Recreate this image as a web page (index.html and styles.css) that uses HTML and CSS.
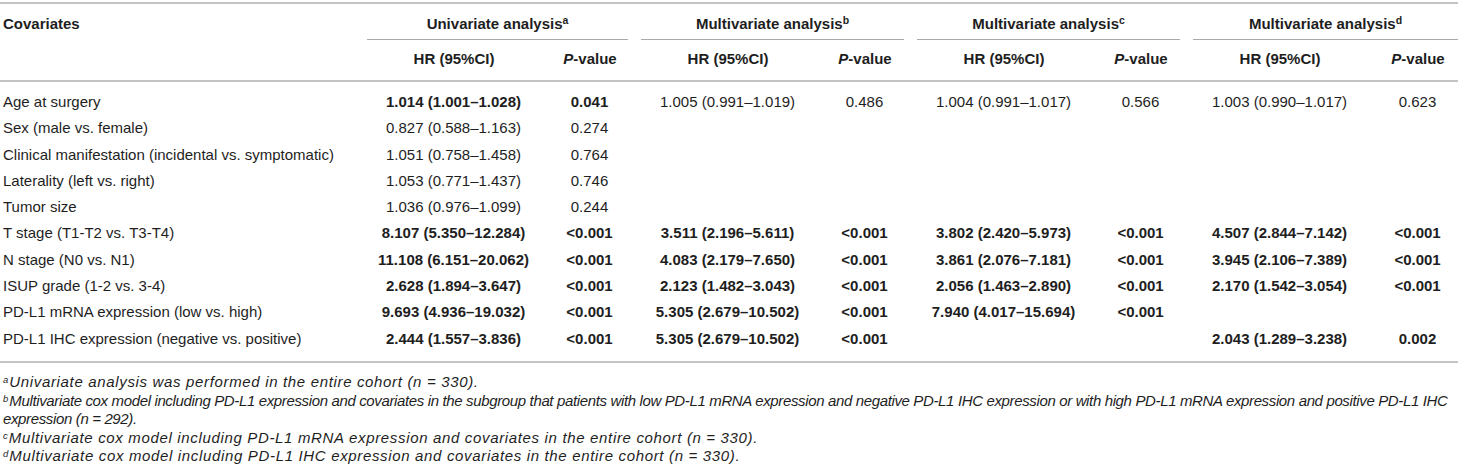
FILE: index.html
```html
<!DOCTYPE html>
<html lang="en">
<head>
<meta charset="utf-8">
<title>Cox regression table</title>
<link rel="stylesheet" href="styles.css">
</head>
<body>
<div class="wrap">
<table class="cox">
  <colgroup>
    <col class="c-cov">
    <col class="c-hr"><col class="c-p1">
    <col class="c-hr"><col class="c-p2">
    <col class="c-hr"><col class="c-p2">
    <col class="c-hr"><col class="c-p3">
  </colgroup>
  <thead>
    <tr class="h1">
      <th class="cov" rowspan="2">Covariates</th>
      <th class="grp" colspan="2"><div class="grp-in">Univariate analysis<sup>a</sup></div></th>
      <th class="grp" colspan="2"><div class="grp-in">Multivariate analysis<sup>b</sup></div></th>
      <th class="grp" colspan="2"><div class="grp-in">Multivariate analysis<sup>c</sup></div></th>
      <th class="grp" colspan="2"><div class="grp-in">Multivariate analysis<sup>d</sup></div></th>
    </tr>
    <tr class="h2">
      <th class="hr">HR (95%CI)</th><th class="p"><i>P</i>-value</th>
      <th class="hr">HR (95%CI)</th><th class="p"><i>P</i>-value</th>
      <th class="hr">HR (95%CI)</th><th class="p"><i>P</i>-value</th>
      <th class="hr">HR (95%CI)</th><th class="p"><i>P</i>-value</th>
    </tr>
  </thead>
  <tbody>
    <tr>
      <td class="cov">Age at surgery</td>
      <td class="hr"><b>1.014 (1.001–1.028)</b></td><td class="p"><b>0.041</b></td>
      <td class="hr">1.005 (0.991–1.019)</td><td class="p">0.486</td>
      <td class="hr">1.004 (0.991–1.017)</td><td class="p">0.566</td>
      <td class="hr">1.003 (0.990–1.017)</td><td class="p">0.623</td>
    </tr>
    <tr>
      <td class="cov">Sex (male vs. female)</td>
      <td class="hr">0.827 (0.588–1.163)</td><td class="p">0.274</td>
      <td class="hr"></td><td class="p"></td>
      <td class="hr"></td><td class="p"></td>
      <td class="hr"></td><td class="p"></td>
    </tr>
    <tr>
      <td class="cov">Clinical manifestation (incidental vs. symptomatic)</td>
      <td class="hr">1.051 (0.758–1.458)</td><td class="p">0.764</td>
      <td class="hr"></td><td class="p"></td>
      <td class="hr"></td><td class="p"></td>
      <td class="hr"></td><td class="p"></td>
    </tr>
    <tr>
      <td class="cov">Laterality (left vs. right)</td>
      <td class="hr">1.053 (0.771–1.437)</td><td class="p">0.746</td>
      <td class="hr"></td><td class="p"></td>
      <td class="hr"></td><td class="p"></td>
      <td class="hr"></td><td class="p"></td>
    </tr>
    <tr>
      <td class="cov">Tumor size</td>
      <td class="hr">1.036 (0.976–1.099)</td><td class="p">0.244</td>
      <td class="hr"></td><td class="p"></td>
      <td class="hr"></td><td class="p"></td>
      <td class="hr"></td><td class="p"></td>
    </tr>
    <tr>
      <td class="cov">T stage (T1-T2 vs. T3-T4)</td>
      <td class="hr"><b>8.107 (5.350–12.284)</b></td><td class="p"><b>&lt;0.001</b></td>
      <td class="hr"><b>3.511 (2.196–5.611)</b></td><td class="p"><b>&lt;0.001</b></td>
      <td class="hr"><b>3.802 (2.420–5.973)</b></td><td class="p"><b>&lt;0.001</b></td>
      <td class="hr"><b>4.507 (2.844–7.142)</b></td><td class="p"><b>&lt;0.001</b></td>
    </tr>
    <tr>
      <td class="cov">N stage (N0 vs. N1)</td>
      <td class="hr"><b>11.108 (6.151–20.062)</b></td><td class="p"><b>&lt;0.001</b></td>
      <td class="hr"><b>4.083 (2.179–7.650)</b></td><td class="p"><b>&lt;0.001</b></td>
      <td class="hr"><b>3.861 (2.076–7.181)</b></td><td class="p"><b>&lt;0.001</b></td>
      <td class="hr"><b>3.945 (2.106–7.389)</b></td><td class="p"><b>&lt;0.001</b></td>
    </tr>
    <tr>
      <td class="cov">ISUP grade (1-2 vs. 3-4)</td>
      <td class="hr"><b>2.628 (1.894–3.647)</b></td><td class="p"><b>&lt;0.001</b></td>
      <td class="hr"><b>2.123 (1.482–3.043)</b></td><td class="p"><b>&lt;0.001</b></td>
      <td class="hr"><b>2.056 (1.463–2.890)</b></td><td class="p"><b>&lt;0.001</b></td>
      <td class="hr"><b>2.170 (1.542–3.054)</b></td><td class="p"><b>&lt;0.001</b></td>
    </tr>
    <tr>
      <td class="cov">PD-L1 mRNA expression (low vs. high)</td>
      <td class="hr"><b>9.693 (4.936–19.032)</b></td><td class="p"><b>&lt;0.001</b></td>
      <td class="hr"><b>5.305 (2.679–10.502)</b></td><td class="p"><b>&lt;0.001</b></td>
      <td class="hr"><b>7.940 (4.017–15.694)</b></td><td class="p"><b>&lt;0.001</b></td>
      <td class="hr"></td><td class="p"></td>
    </tr>
    <tr>
      <td class="cov">PD-L1 IHC expression (negative vs. positive)</td>
      <td class="hr"><b>2.444 (1.557–3.836)</b></td><td class="p"><b>&lt;0.001</b></td>
      <td class="hr"><b>5.305 (2.679–10.502)</b></td><td class="p"><b>&lt;0.001</b></td>
      <td class="hr"></td><td class="p"></td>
      <td class="hr"><b>2.043 (1.289–3.238)</b></td><td class="p"><b>0.002</b></td>
    </tr>
  </tbody>
</table>
<div class="notes">
  <p><sup>a</sup>Univariate analysis was performed in the entire cohort (n = 330).</p>
  <p class="tight"><sup>b</sup>Multivariate cox model including PD-L1 expression and covariates in the subgroup that patients with low PD-L1 mRNA expression and negative PD-L1 IHC expression or with high PD-L1 mRNA expression and positive PD-L1 IHC<br>expression (n = 292).</p>
  <p><sup>c</sup>Multivariate cox model including PD-L1 mRNA expression and covariates in the entire cohort (n = 330).</p>
  <p><sup>d</sup>Multivariate cox model including PD-L1 IHC expression and covariates in the entire cohort (n = 330).</p>
</div>
</div>
</body>
</html>
```

FILE: styles.css
```css
html, body {
  margin: 0;
  padding: 0;
  background: #ffffff;
}

body {
  font-family: "Liberation Sans", Arial, sans-serif;
  color: #1e1e1e;
}

.wrap {
  width: 1458px;
  padding-top: 2px;
}

.cox {
  width: 1458px;
  table-layout: fixed;
  border-collapse: separate;
  border-spacing: 0;
  font-size: 15px;
  line-height: 18px;
}

.c-cov { width: 354px; }
.c-hr { width: 186px; }
.c-p1 { width: 88px; }
.c-p2 { width: 90px; }
.c-p3 { width: 92px; }

.cox th {
  font-weight: bold;
  text-align: center;
  vertical-align: top;
}

.cox .h1 th {
  border-top: 2px solid #c4c4c4;
  padding: 11px 0 0 0;
}

.cox th.cov {
  text-align: left;
  padding-left: 3px;
  border-bottom: 2px solid #c4c4c4;
}

.cox th.grp {
  padding-left: 13px;
}

.grp-in {
  padding-bottom: 6px;
  border-bottom: 1px solid #a9a9a9;
}

.cox sup {
  font-size: 10.5px;
  line-height: 0;
  vertical-align: 5px;
}

.cox .h2 th {
  padding: 10px 0 12px 0;
  border-bottom: 2px solid #c4c4c4;
}

.cox th.hr,
.cox td.hr {
  padding-left: 14px;
}

.cox th.p,
.cox td.p {
  padding-left: 12px;
}

.cox td {
  padding-top: 4.15px;
  padding-bottom: 4.15px;
  text-align: center;
  white-space: nowrap;
}

.cox td.cov {
  text-align: left;
  padding-left: 3px;
}

.cox tbody tr:first-child td {
  padding-top: 11px;
}

.cox tbody tr:last-child td {
  padding-bottom: 13.15px;
  border-bottom: 2px solid #c4c4c4;
}

.notes {
  margin-top: 10.5px;
  font-style: italic;
  font-size: 15px;
  line-height: 18.5px;
  letter-spacing: 0.66px;
  padding-left: 3px;
}

.notes p {
  margin: 0;
}

.notes p.tight {
  letter-spacing: -0.36px;
}

.notes sup {
  font-size: 9.5px;
  line-height: 0;
  vertical-align: 4px;
  letter-spacing: 0;
  margin-right: 1px;
}
```
